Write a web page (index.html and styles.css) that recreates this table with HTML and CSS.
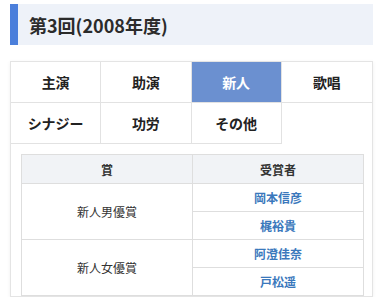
FILE: index.html
```html
<!DOCTYPE html>
<html lang="ja">
<head>
<meta charset="utf-8">
<link rel="stylesheet" href="styles.css">
</head>
<body>
<div class="page">
  <h2 class="heading">第3回(2008年度)</h2>
  <div class="card">
    <div class="tabs">
      <div class="tab">主演</div>
      <div class="tab">助演</div>
      <div class="tab active">新人</div>
      <div class="tab">歌唱</div>
      <div class="tab">シナジー</div>
      <div class="tab">功労</div>
      <div class="tab">その他</div>
    </div>
    <div class="body">
      <table class="awards">
        <thead>
          <tr><th>賞</th><th>受賞者</th></tr>
        </thead>
        <tbody>
          <tr><td rowspan="2" class="prize">新人男優賞</td><td class="name">岡本信彦</td></tr>
          <tr><td class="name">梶裕貴</td></tr>
          <tr><td rowspan="2" class="prize">新人女優賞</td><td class="name">阿澄佳奈</td></tr>
          <tr><td class="name">戸松遥</td></tr>
        </tbody>
      </table>
    </div>
  </div>
</div>
</body>
</html>
```
FILE: styles.css
```css
html, body {
  margin: 0;
  padding: 0;
  background: #ffffff;
  font-family: "Noto Sans CJK JP", "Noto Sans", sans-serif;
  color: #222;
}
.page {
  padding: 4px 12px 0 10px;
}
.heading {
  margin: 0;
  height: 41px;
  display: flex;
  align-items: center;
  background: #eef2f9;
  border-left: 8px solid #4b7fdb;
  padding-left: 11px;
  font-size: 18px;
  font-weight: 700;
  color: #2b2b2b;
}
.card {
  margin-top: 16px;
  border: 1px solid #e4e4e4;
  box-shadow: 0 1px 4px rgba(0,0,0,0.06);
  background: #fff;
}
.tabs {
  display: grid;
  grid-template-columns: repeat(4, 1fr);
}
.tab {
  height: 40px;
  display: flex;
  align-items: center;
  justify-content: center;
  font-size: 14px;
  font-weight: 700;
  color: #222;
  border-right: 1px solid #e2e2e2;
  border-bottom: 1px solid #e2e2e2;
}
.tab:nth-child(4n) {
  border-right: none;
}
.tab.active {
  background: #6b90d0;
  color: #fff;
}
.body {
  padding: 10px 8px 0 10px;
}
.awards {
  width: 100%;
  border-collapse: collapse;
  font-size: 12px;
  table-layout: fixed;
}
.awards th, .awards td {
  border: 1px solid #dedede;
  text-align: center;
  padding: 0;
}
.awards th {
  background: #f1f3f6;
  height: 28px;
  font-weight: 700;
  color: #333;
}
.awards td {
  height: 27px;
}
.awards .prize {
  color: #333;
}
.awards .name {
  color: #3a78bc;
  font-weight: 700;
}
```
